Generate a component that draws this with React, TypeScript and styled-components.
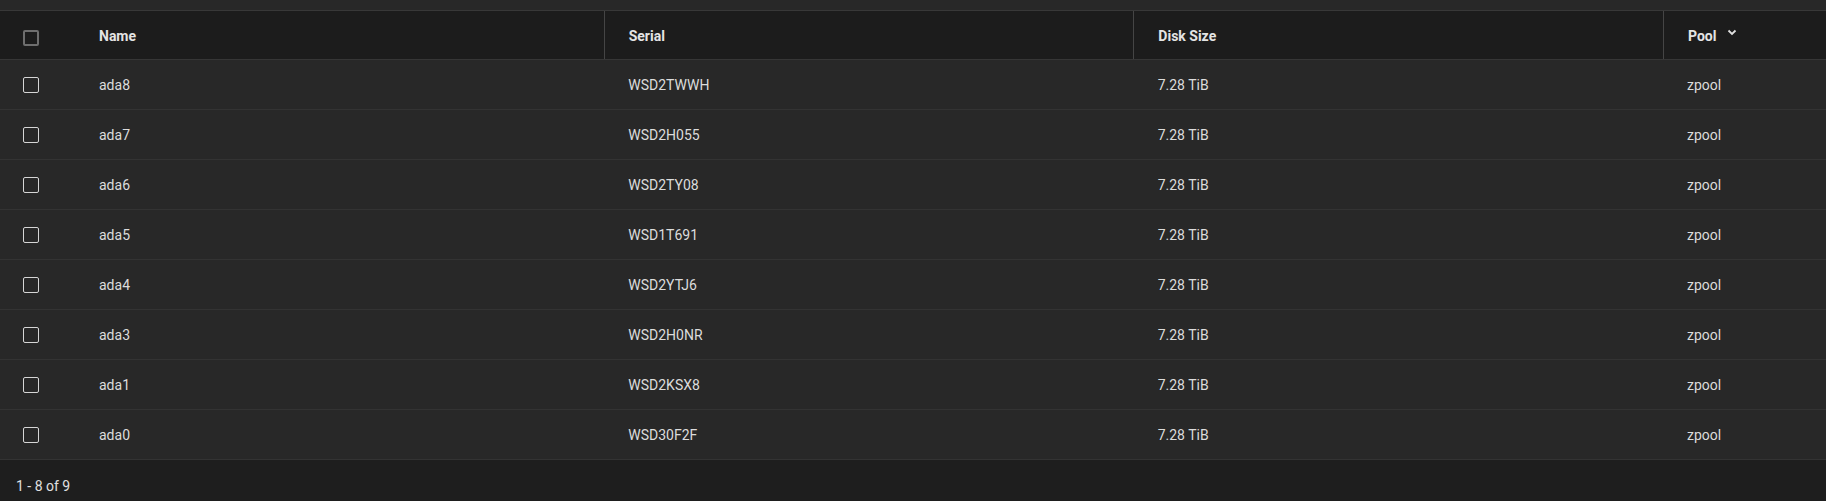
import React from 'react';
import styled, { createGlobalStyle } from 'styled-components';

const GlobalStyle = createGlobalStyle`
  html, body {
    margin: 0;
    padding: 0;
    background: #282828;
  }
  body {
    font-family: Roboto, "Noto Sans", Arial, sans-serif;
    font-size: 14px;
    color: #e0e0e0;
  }
`;

interface Disk {
  name: string;
  serial: string;
  size: string;
  pool: string;
}

const disks: Disk[] = [
  { name: 'ada8', serial: 'WSD2TWWH', size: '7.28 TiB', pool: 'zpool' },
  { name: 'ada7', serial: 'WSD2H055', size: '7.28 TiB', pool: 'zpool' },
  { name: 'ada6', serial: 'WSD2TY08', size: '7.28 TiB', pool: 'zpool' },
  { name: 'ada5', serial: 'WSD1T691', size: '7.28 TiB', pool: 'zpool' },
  { name: 'ada4', serial: 'WSD2YTJ6', size: '7.28 TiB', pool: 'zpool' },
  { name: 'ada3', serial: 'WSD2H0NR', size: '7.28 TiB', pool: 'zpool' },
  { name: 'ada1', serial: 'WSD2KSX8', size: '7.28 TiB', pool: 'zpool' },
  { name: 'ada0', serial: 'WSD30F2F', size: '7.28 TiB', pool: 'zpool' },
];

export default function App() {
  return (
    <>
      <GlobalStyle />
      <Page>
        <TopBar />
        <HeaderRow>
          <CheckCell $header>
            <Checkbox $header />
          </CheckCell>
          <HeadCell>Name</HeadCell>
          <HeadCell $divider>Serial</HeadCell>
          <HeadCell $divider>Disk Size</HeadCell>
          <HeadCell $divider $narrow>
            Pool
            <SortIcon width="10" height="7" viewBox="0 0 10 7">
              <polyline points="1.5,1.5 5,5 8.5,1.5" fill="none" stroke="#e0e0e0" strokeWidth="1.8" />
            </SortIcon>
          </HeadCell>
        </HeaderRow>
        {disks.map((d) => (
          <Row key={d.name}>
            <CheckCell>
              <Checkbox />
            </CheckCell>
            <Cell>{d.name}</Cell>
            <Cell>{d.serial}</Cell>
            <Cell>{d.size}</Cell>
            <Cell $narrow>{d.pool}</Cell>
          </Row>
        ))}
        <Footer>1 - 8 of 9</Footer>
      </Page>
    </>
  );
}

const Page = styled.div`
  width: 1826px;
  height: 501px;
  display: flex;
  flex-direction: column;
  background: #282828;
  overflow: hidden;
`;

const TopBar = styled.div`
  height: 10px;
  flex: none;
  background: #282828;
  border-bottom: 1px solid #383838;
`;

const HeaderRow = styled.div`
  display: flex;
  flex: none;
  height: 48px;
  background: #1c1c1c;
  border-bottom: 1px solid #363636;
`;

const Row = styled.div`
  display: flex;
  flex: none;
  height: 49px;
  background: #282828;
  border-bottom: 1px solid #333333;
`;

const CheckCell = styled.div<{ $header?: boolean }>`
  width: 75px;
  flex: none;
  display: flex;
  align-items: center;
  padding-left: 23px;
  padding-top: ${(p) => (p.$header ? '6px' : '1px')};
  box-sizing: border-box;
`;

const Checkbox = styled.span<{ $header?: boolean }>`
  width: 16px;
  height: 16px;
  box-sizing: border-box;
  border-radius: 2px;
  border: ${(p) => (p.$header ? '2px solid #6e6e6e' : '1.5px solid #d6d6d6')};
`;

const HeadCell = styled.div<{ $divider?: boolean; $narrow?: boolean }>`
  flex: ${(p) => (p.$narrow ? 'none' : '1 1 0')};
  width: ${(p) => (p.$narrow ? '163px' : 'auto')};
  display: flex;
  align-items: center;
  padding-left: 24px;
  padding-top: 2px;
  box-sizing: border-box;
  font-weight: 700;
  color: #e4e4e4;
  border-left: ${(p) => (p.$divider ? '1px solid #454545' : 'none')};
`;

const SortIcon = styled.svg`
  margin-left: 11px;
  align-self: flex-start;
  margin-top: 16px;
`;

const Cell = styled.div<{ $narrow?: boolean }>`
  flex: ${(p) => (p.$narrow ? 'none' : '1 1 0')};
  width: ${(p) => (p.$narrow ? '163px' : 'auto')};
  display: flex;
  align-items: center;
  padding-left: 24px;
  padding-top: 1px;
  box-sizing: border-box;
  color: #dcdcdc;
`;

const Footer = styled.div`
  flex: 1;
  padding: 18px 0 0 16px;
  line-height: 16px;
  background: #1e1e1e;
  color: #e0e0e0;
`;
